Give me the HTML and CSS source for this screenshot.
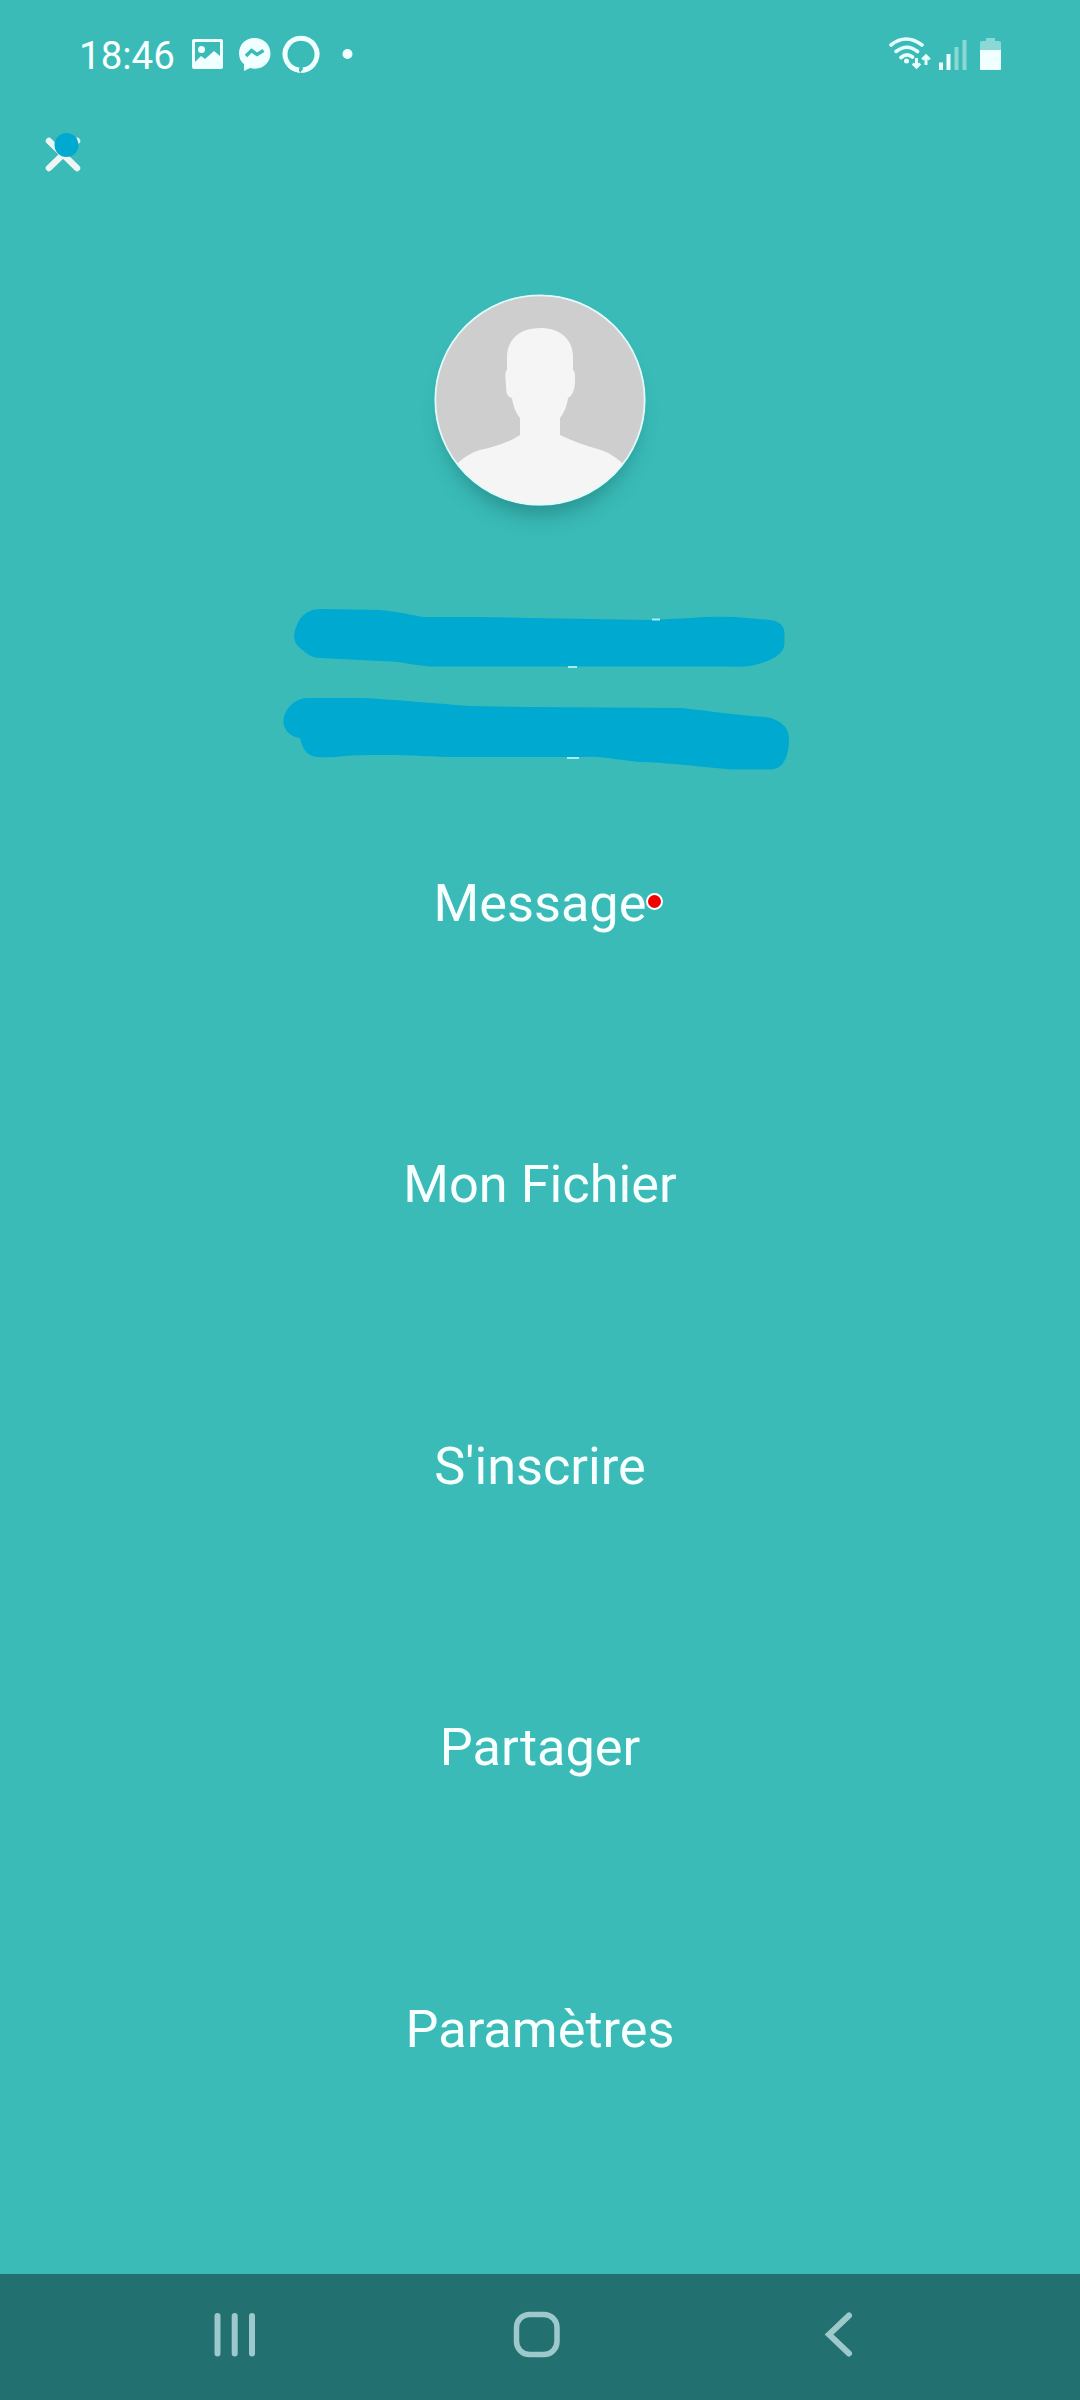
FILE: index.html
```html
<!DOCTYPE html>
<html lang="fr">
<head>
<meta charset="utf-8">
<title>Menu</title>
<link rel="stylesheet" href="styles.css">
</head>
<body>
<div class="screen">
  <header class="status">
    <span class="clock">18:46</span>
    <svg class="notifications" viewBox="190 34 166 42" width="166" height="42">
      <path class="fill" fill-rule="evenodd" d="M194 39H221Q223 39 223 41V67Q223 69 221 69H194Q192 69 192 67V41Q192 39 194 39ZM195 42V62L201 56L205 59L214 51L220 56V42Z"/>
      <circle class="fill" cx="201.500" cy="49.500" r="3.500"/>
      <path class="fill" d="M254.500 38C245 38 239 45 239 53.500C239 58 241 62 244 64V71L250 68C262 71 270.500 63 270.500 53.500C270.500 45 264 38 254.500 38Z"/>
      <path class="cut" d="M246 56L251.500 50.500L257 54.500L263.500 50.500"/>
      <path class="ring" d="M299 70A16 16 0 1 1 303 70"/>
      <path class="fill" d="M291 65C296 67 299 69 300 73C294 72 290 70 288 67ZM312 65C306 67 302 69 300.500 73C307 73 312 70 315 66Z"/>
      <circle class="fill" cx="347.500" cy="54" r="5"/>
    </svg>
    <svg class="system" viewBox="886 34 120 38" width="120" height="38">
      <path class="wifi" d="M891 45Q906 33 922 45M896 51.500Q907 43 917.500 51.500M901 57.500Q907 52.500 912.500 57"/>
      <circle class="fill" cx="906.500" cy="61" r="2.500"/>
      <path class="arrows" d="M916.500 58V66M912.800 63.500L916.500 67.200L920.200 63.500M926 65V57M922.300 59.500L926 55.800L929.700 59.500"/>
      <path class="fill" d="M939 62.500h4v7.500h-4zM946.500 54h4v16h-4z"/>
      <path class="faint" d="M954.500 47h4v23h-4zM962.500 40h4v30h-4zM980 50V43Q980 41 982 41H986V38H995V41H999Q1001 41 1001 43V50Z"/>
      <path class="fill" d="M980 50H1001V69Q1001 70 1000 70H981Q980 70 980 69Z"/>
    </svg>
  </header>
  <div class="toolbar">
    <svg viewBox="44 130 40 44" width="40" height="44">
      <path class="close" d="M49 141L77 168M77 141L49 168"/>
      <circle class="marker" cx="66.500" cy="145" r="12"/>
    </svg>
  </div>
  <section class="profile">
    <svg class="avatar" viewBox="434 294 212 212" width="212" height="212">
      <defs><clipPath id="disc"><circle cx="540" cy="400" r="105"/></clipPath></defs>
      <circle class="backdrop" cx="540" cy="400" r="105"/>
      <path class="person" clip-path="url(#disc)" d="M540 328C519 328 507 340 507 357V370C505 371 505 376 506 384C506 393 507 397 512 398C513 406 516 413 520 418V435C508 443 494 447 480 450C470 453 463 458 457 464V510H623V464C617 458 610 453 601 450C586 446 572 441 560 435V418C564 413 567 406 568 398C572 396 575 390 575 381C575 374 575 371 573 370V355C572 338 559 328 540 328Z"/>
      <circle class="rim" cx="540" cy="400" r="104.700"/>
    </svg>
    <svg class="redaction" viewBox="270 590 530 190" width="530" height="190">
      <path class="ink" d="M321 609L380 610C400 612 412 615 423 617L480 617L530 618L650 620L690 618Q712 616 735 617L765 619.500C780 620 785 626 784.500 635V645C783 655 770 662 750 666Q742 667 730 666.500H430C410 665 402 661.500 390 661.500L320 658C310 658 304 651 300 648Q294 643 294 636C296 622 303 609 321 609Z"/>
      <path class="ink" d="M307 698H363C400 700 430 703 470 706L530 707L682 708C715 712 745 716 766 717C782 720 789 728 789 739C789 757 783 769 771 769.500H735C705 768 680 763 640 762C610 759 600 756 585 757H450C410 755 370 754 345 756Q330 758 318 757C304 756 302 745 300 738C290 737 284 730 283.500 722C283 710 295 698 307 698Z"/>
      <path class="glint" d="M652 619.500H660M568 667H577M567 758H579"/>
    </svg>
  </section>
  <nav class="menu">
    <a><span class="label">Message<i class="dot"></i></span></a>
    <a>Mon Fichier</a>
    <a>S'inscrire</a>
    <a>Partager</a>
    <a>Paramètres</a>
  </nav>
  <footer class="navbar">
    <svg viewBox="213 2312 44 46" width="44" height="46"><path class="nav thick" d="M217.500 2316V2353.500M234.700 2316V2353.500M252 2316V2353.500"/></svg>
    <svg viewBox="513 2310 48 50" width="48" height="50"><rect class="nav" x="516.500" y="2314.500" width="40.500" height="40" rx="13"/></svg>
    <svg viewBox="824 2310 30 50" width="30" height="50"><path class="nav thick" d="M849 2315.500L829 2334.500L849 2353.500"/></svg>
  </footer>
</div>
</body>
</html>
```
FILE: styles.css
```css
body { margin: 0; }
.screen {
  width: 1080px;
  height: 2400px;
  display: flex;
  flex-direction: column;
  background: #3abbb8;
  color: #f8ffff;
  font-family: Roboto, sans-serif;
  overflow: hidden;
}
svg { display: block; fill: none; flex: none; }
.status {
  height: 110px;
  box-sizing: border-box;
  padding: 34px 74px 0 79px;
  display: flex;
  align-items: flex-start;
}
.clock { width: 111px; font-size: 38.5px; line-height: 44px; }
.system { margin-left: auto; }
.fill { fill: #f0ffff; }
.faint { fill: #8cd8d6; }
.cut { stroke: #3abbb8; stroke-width: 3.5; }
.ring { stroke: #f0ffff; stroke-width: 5; }
.wifi { stroke: #e8ffff; stroke-width: 3.6; stroke-linecap: round; }
.arrows { stroke: #e8ffff; stroke-width: 3; }
.toolbar { height: 184px; box-sizing: border-box; padding: 20px 44px; }
.close { stroke: #edf6f4; stroke-width: 6.5; stroke-linecap: round; }
.marker { fill: #00a9d0; }
.profile { display: flex; flex-direction: column; align-items: center; }
.avatar {
  border-radius: 50%;
  box-shadow: 0 18px 20px -9px rgba(20, 90, 88, .42);
}
.backdrop { fill: #cecece; }
.person { fill: #f5f5f5; }
.rim { stroke: #e4fafb; stroke-width: 1.8; }
.redaction { margin: 84px 0 0 -10px; }
.ink { fill: #00a9d0; }
.glint { stroke: #a2eef5; stroke-width: 2; }
.menu {
  display: grid;
  grid-auto-rows: 281.5px;
  margin-top: -18px;
  font-size: 52.3px;
}
.menu a { display: flex; align-items: center; justify-content: center; }
.label { position: relative; }
.dot {
  position: absolute;
  left: 100%;
  top: 21px;
  width: 13px;
  height: 13px;
  border: 2.5px solid #fff;
  border-radius: 50%;
  background: #f00000;
}
.navbar {
  height: 126px;
  margin-top: auto;
  box-sizing: border-box;
  padding: 0 226px 4px 213px;
  display: flex;
  flex: none;
  align-items: center;
  background: #22706f;
}
.navbar svg:nth-child(2) { margin-left: 256px; }
.navbar svg:nth-child(3) { margin-left: auto; }
.nav { stroke: #9dc8cc; stroke-width: 5.5; stroke-linecap: round; }
.thick { stroke-width: 6; }
```
